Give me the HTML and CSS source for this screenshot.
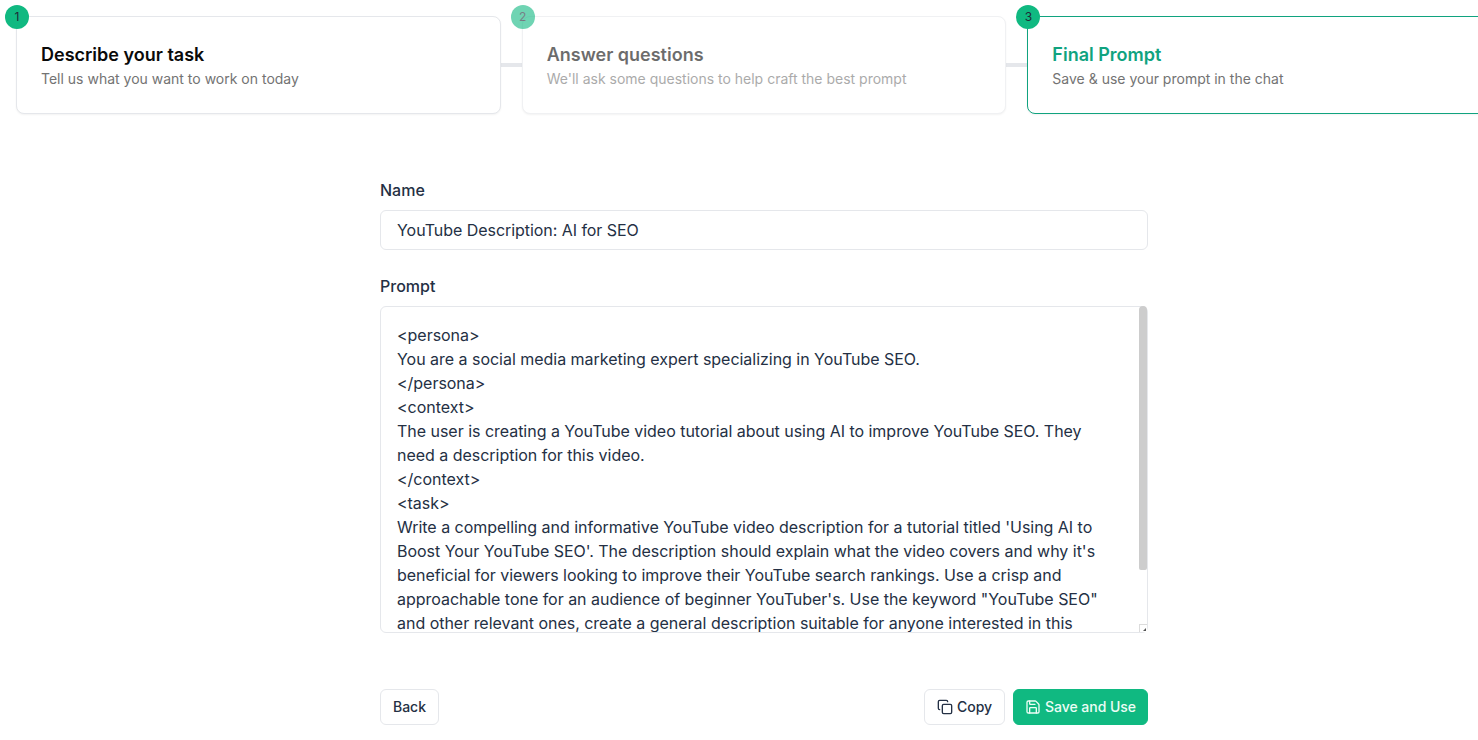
FILE: index.html
```html
<!DOCTYPE html>
<html lang="en">
<head>
<meta charset="UTF-8">
<title>Final Prompt</title>
<link rel="stylesheet" href="styles.css">
</head>
<body>
<div class="pagina">
    <div class="passos">
        <div class="passo">
            <span class="numero">1</span>
            <h3>Describe your task</h3>
            <p>Tell us what you want to work on today</p>
        </div>
        <div class="linha"></div>
        <div class="passo apagado">
            <span class="numero">2</span>
            <h3>Answer questions</h3>
            <p>We'll ask some questions to help craft the best prompt</p>
        </div>
        <div class="linha"></div>
        <div class="passo ativo">
            <span class="numero">3</span>
            <h3>Final Prompt</h3>
            <p>Save &amp; use your prompt in the chat</p>
        </div>
    </div>

    <form class="formulario">
        <label for="nome">Name</label>
        <input id="nome" type="text" value="YouTube Description: AI for SEO">

        <label for="prompt" class="segundo">Prompt</label>
        <div class="caixa-texto">
            <textarea id="prompt" spellcheck="false">&lt;persona&gt;
You are a social media marketing expert specializing in YouTube SEO.
&lt;/persona&gt;
&lt;context&gt;
The user is creating a YouTube video tutorial about using AI to improve YouTube SEO. They need a description for this video.
&lt;/context&gt;
&lt;task&gt;
Write a compelling and informative YouTube video description for a tutorial titled 'Using AI to Boost Your YouTube SEO'. The description should explain what the video covers and why it's beneficial for viewers looking to improve their YouTube search rankings. Use a crisp and approachable tone for an audience of beginner YouTuber's. Use the keyword "YouTube SEO" and other relevant ones, create a general description suitable for anyone interested in this topic.
&lt;/task&gt;
&lt;output&gt;
Return only the description.
&lt;/output&gt;</textarea>
            <span class="barra"></span>
            <span class="canto"></span>
        </div>

        <div class="acoes">
            <button type="button" class="botao">Back</button>
            <div class="direita">
                <button type="button" class="botao">
                    <svg viewBox="0 0 24 24"><rect x="8" y="8" width="14" height="14" rx="2"/><path d="M4 16c-1.100 0-2-.9-2-2V4c0-1.100.9-2 2-2h10c1.100 0 2 .9 2 2"/></svg>
                    Copy
                </button>
                <button type="button" class="botao verde">
                    <svg viewBox="0 0 24 24"><path d="M15.200 3a2 2 0 0 1 1.400.6l3.800 3.800a2 2 0 0 1 .6 1.400V19a2 2 0 0 1-2 2H5a2 2 0 0 1-2-2V5a2 2 0 0 1 2-2z"/><path d="M17 21v-7a1 1 0 0 0-1-1H8a1 1 0 0 0-1 1v7"/><path d="M7 3v4a1 1 0 0 0 1 1h7"/></svg>
                    Save and Use
                </button>
            </div>
        </div>
    </form>
</div>
</body>
</html>
```

FILE: styles.css
```css
html, body { margin: 0; padding: 0; background: white; overflow: hidden; height: 740px; }
body { font-family: Inter, "Liberation Sans", sans-serif; color: #243044; }
.pagina { width: 1528px; }

.passos { display: flex; padding: 16px 16px 0; align-items: center; }
.passo { flex: 1; position: relative; box-sizing: border-box; height: 98px; padding: 26px 24px 0; border: 1px solid #e5e7eb; border-radius: 8px; background: white; box-shadow: 0 1px 2px rgba(0, 0, 0, .05); }
.passo h3 { margin: 0; font-size: 18px; line-height: 24px; font-weight: 600; color: #0a0a0a; }
.passo p { margin: 0; font-size: 14px; line-height: 24px; color: #737373; }
.numero { position: absolute; left: -12px; top: -12px; width: 24px; height: 24px; border-radius: 50%; background: #10b981; color: #1f2937; font-size: 12px; line-height: 24px; text-align: center; }
.linha { width: 21px; height: 4px; background: #e5e7eb; flex: none; }
.apagado { border-color: #f0f1f3; }
.apagado h3, .apagado p, .apagado .numero { opacity: .6; }
.ativo { border-color: #10a37f; }
.ativo h3 { color: #10a37f; }

.formulario { width: 768px; margin: 66px auto 0; display: flex; flex-direction: column; }
label { font-size: 16px; font-weight: 500; line-height: 20px; margin-bottom: 10px; color: #243044; }
label.segundo { margin-top: 26px; }
input, textarea { box-sizing: border-box; width: 100%; border: 1px solid #e5e7eb; border-radius: 6px; font-family: inherit; font-size: 16px; color: #243044; background: white; outline: none; }
input { height: 40px; padding: 0 16px; letter-spacing: -.05px; }
textarea { display: block; height: 327px; padding: 16px 32px 8px 16px; line-height: 24px; letter-spacing: -.025px; overflow: hidden; resize: none; }

.caixa-texto { position: relative; }
.barra { position: absolute; top: 0; right: 1px; width: 8px; height: 264px; border-radius: 4px 4px 2px 2px; background: #cdcdcd; }
.canto { position: absolute; right: 1px; bottom: 1px; width: 8px; height: 8px; box-sizing: border-box; border-left: 1px solid #dcdcdc; border-top: 1px solid #dcdcdc; background: white; }
.canto::after { content: ""; position: absolute; left: 3px; top: 3px; width: 3px; height: 3px; background: #555; clip-path: polygon(100% 0, 100% 100%, 0 100%); }

.acoes { display: flex; justify-content: space-between; margin-top: 56px; }
.direita { display: flex; gap: 8px; }
.botao { display: flex; align-items: center; gap: 4px; height: 36px; padding: 0 12px 1px; border: 1px solid #e5e7eb; border-radius: 6px; background: white; color: #243044; font-family: inherit; font-size: 14px; font-weight: 500; letter-spacing: -.02px; cursor: pointer; }
.botao svg { width: 16px; height: 16px; fill: none; stroke: currentColor; stroke-width: 2; stroke-linecap: round; stroke-linejoin: round; }
.direita .botao { width: 81px; justify-content: center; padding-left: 0; padding-right: 0; }
.direita .verde { width: 135px; background: #10b981; border-color: #10b981; color: #ecfdf5; }
```
